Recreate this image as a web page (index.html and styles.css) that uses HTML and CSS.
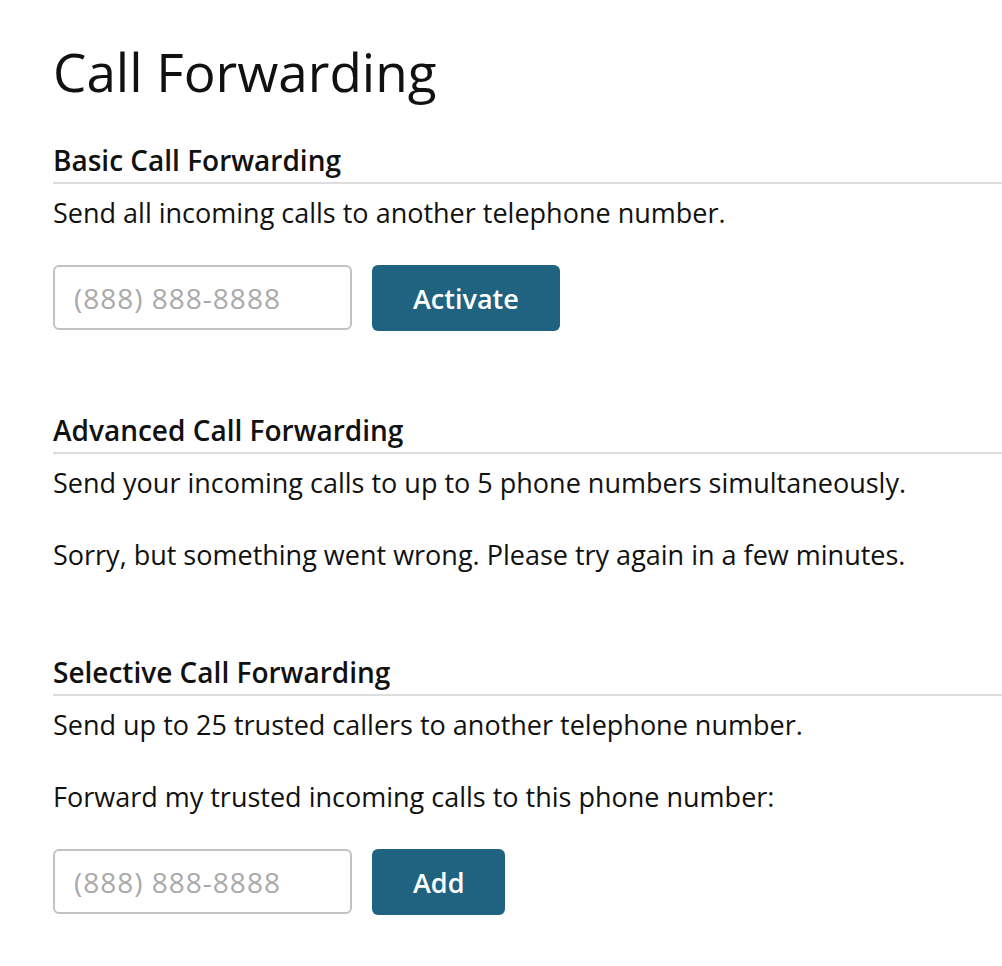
FILE: index.html
```html
<!DOCTYPE html>
<html lang="en">
<head>
    <meta charset="utf-8">
    <title>Call Forwarding</title>
    <link rel="stylesheet" href="styles.css">
</head>
<body>
    <h1 class="page-title">Call Forwarding</h1>

    <div class="section">
        <h2 class="section-title">Basic Call Forwarding</h2>
        <p>Send all incoming calls to another telephone number.</p>
        <form class="number-form">
            <input type="tel" class="number-input" placeholder="(888) 888-8888">
            <button type="button" class="btn">Activate</button>
        </form>
    </div>

    <div class="section">
        <h2 class="section-title">Advanced Call Forwarding</h2>
        <p>Send your incoming calls to up to 5 phone numbers simultaneously.</p>
        <p>Sorry, but something went wrong. Please try again in a few minutes.</p>
    </div>

    <div class="section">
        <h2 class="section-title">Selective Call Forwarding</h2>
        <p>Send up to 25 trusted callers to another telephone number.</p>
        <p>Forward my trusted incoming calls to this phone number:</p>
        <form class="number-form">
            <input type="tel" class="number-input" placeholder="(888) 888-8888">
            <button type="button" class="btn">Add</button>
        </form>
    </div>
</body>
</html>
```

FILE: styles.css
```css
html, body {
    margin: 0;
    padding: 0;
    background: #fff;
}
body {
    padding: 42px 0 40px 53px;
    font-family: "Open Sans", "Noto Sans", sans-serif;
    font-size: 27px;
    line-height: 36px;
    color: #111;
    overflow: hidden;
}
.page-title {
    margin: 0;
    font-size: 53px;
    line-height: 60px;
    font-weight: 400;
}
.section {
    margin-top: 40px;
}
.section + .section {
    margin-top: 81px;
}
.section-title {
    margin: 0;
    padding-bottom: 4px;
    border-bottom: 2px solid #dddddd;
    font-size: 28px;
    line-height: 36px;
    font-weight: 600;
}
.section p {
    margin: 36px 0 0;
}
.section .section-title + p {
    margin-top: 11px;
}
.number-form {
    display: flex;
    gap: 20px;
    margin-top: 34px;
}
.number-input {
    box-sizing: border-box;
    width: 299px;
    height: 65px;
    padding: 0 19px;
    border: 2px solid #c2c2c2;
    border-radius: 6px;
    font-family: inherit;
    font-size: 28px;
    letter-spacing: 1px;
    color: #111;
}
.number-input::placeholder {
    color: #a9a9a9;
}
.btn {
    height: 66px;
    padding: 0 41px;
    border: none;
    border-radius: 6px;
    background: #1f6380;
    color: #fff;
    font-family: inherit;
    font-size: 27px;
    font-weight: 600;
}
```
